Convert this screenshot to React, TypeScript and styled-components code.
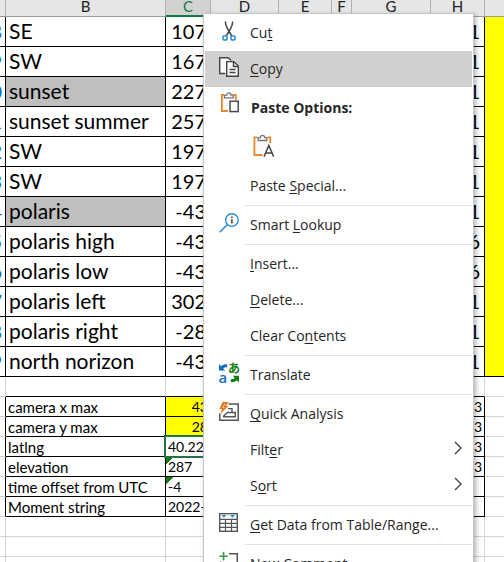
import React from "react";
import styled, { createGlobalStyle, css } from "styled-components";

const GlobalStyle = createGlobalStyle`
  *, *::before, *::after { box-sizing: border-box; }
  body {
    margin: 0;
    overflow: hidden;
    background: #fff;
    color: #000;
    font-family: Lato, "Liberation Sans", sans-serif;
  }
`;

const Page = styled.main`
  position: relative;
  height: 100vh;
  overflow: hidden;
`;

/* ---------- worksheet ---------- */

const Sheet = styled.table`
  width: 100%;
  table-layout: fixed;
  border-collapse: separate;
  border-spacing: 0;
`;

const Col = styled.col<{ $width?: number }>`
  ${(p) => p.$width && css`width: ${p.$width}px;`}
`;

const ColumnHead = styled.th<{ $active?: boolean }>`
  height: 17px;
  padding: 0 0 ${(p) => (p.$active ? 2 : 3)}px;
  line-height: 13px;
  font-size: 15px;
  font-weight: 400;
  background: ${(p) => (p.$active ? "#d2d2d2" : "#e6e6e6")};
  color: ${(p) => (p.$active ? "#217346" : "#222")};
  border-right: 1px solid #b1b1b1;
  border-bottom: ${(p) => (p.$active ? "2px solid #107c41" : "1px solid #9b9b9b")};
  &:last-child {
    border-right: 0;
  }
`;

type CellProps = {
  $large?: boolean;
  $ruled?: boolean;
  $underlined?: boolean;
  $number?: boolean;
  $right?: boolean;
  $fill?: string;
  $flag?: boolean;
  $selected?: boolean;
  $bare?: boolean;
};

const RULE = "#000";
const GRIDLINE = "#d4d4d4";

const Cell = styled.td<CellProps>`
  height: ${(p) => (p.$large ? 30 : 20)}px;
  padding: ${(p) => (p.$large ? "0 4px 1px 3px" : "0 2px")};
  overflow: hidden;
  white-space: nowrap;
  font-size: ${(p) => (p.$large ? (p.$number ? 20 : 21) : p.$number ? 14 : 15)}px;
  line-height: ${(p) => (p.$large ? 28 : 18)}px;
  text-align: ${(p) => (p.$right ? "right" : "left")};
  background: ${(p) => p.$fill ?? "#fff"};
  border-right: 1px solid ${(p) => (p.$ruled ? RULE : GRIDLINE)};
  border-bottom: 1px solid
    ${(p) => (p.$bare ? "transparent" : p.$ruled || p.$underlined ? RULE : GRIDLINE)};
  &:last-child {
    border-right: 0;
  }
  ${(p) =>
    p.$flag &&
    css`
      background: linear-gradient(135deg, #107c10 5px, transparent 5px) #fff;
    `}
  ${(p) =>
    p.$selected &&
    css`
      position: relative;
      overflow: visible;
      &::after {
        content: "";
        position: absolute;
        inset: -2px;
        border: 2px solid #217346;
      }
    `}
`;

/* Column A is scrolled almost out of view; only the tail of each number shows. */
const IdCell = styled(Cell)`
  padding: 0 0 1px;
  color: #0070c0;
`;

const Tail = styled.span`
  display: flex;
  justify-content: flex-end;
  padding-right: 3px;
`;

const LeadCell = styled(Cell)`
  padding: 0;
  border-right-color: ${RULE};
`;

const YELLOW = "#ffff00";
const GREY = "#bfbfbf";

const columns = [
  { name: "A", width: 6 },
  { name: "B", width: 160 },
  { name: "C", width: 45 },
  { name: "D", width: 68 },
  { name: "E", width: 53 },
  { name: "F", width: 20 },
  { name: "G", width: 79 },
  { name: "H", width: 54 },
  { name: "" },
];

const places = [
  { id: 8, name: "SE", c: "107", h: "1" },
  { id: 9, name: "SW", c: "167", h: "1" },
  { id: 10, name: "sunset", c: "227", h: "1", marked: true },
  { id: 11, name: "sunset summer", c: "257", h: "1" },
  { id: 12, name: "SW", c: "197", h: "1" },
  { id: 13, name: "SW", c: "197", h: "1" },
  { id: 14, name: "polaris", c: "-43", h: "1", marked: true },
  { id: 15, name: "polaris high", c: "-43", h: "6" },
  { id: 16, name: "polaris low", c: "-43", h: "6" },
  { id: 17, name: "polaris left", c: "302", h: "1" },
  { id: 18, name: "polaris right", c: "-28", h: "1" },
  { id: 19, name: "north norizon", c: "-43", h: "1" },
];

type Setting = {
  name: string;
  value: string;
  h: string;
  fill?: string;
  selected?: boolean;
  flag?: boolean;
};

const settings: Setting[] = [
  { name: "camera x max", value: "43", h: "3", fill: YELLOW },
  { name: "camera y max", value: "28", h: "3", fill: YELLOW },
  { name: "latlng", value: "40.22", h: "3", selected: true },
  { name: "elevation", value: "287", h: "3", flag: true },
  { name: "time offset from UTC", value: "-4", h: "", flag: true },
  { name: "Moment string", value: "2022-", h: "" },
];

const middle = ["D", "E", "F", "G"];

function EmptyRow({ underlined }: { underlined?: boolean }) {
  return (
    <tr>
      {columns.map((_, i) => (
        <Cell key={i} $underlined={underlined && i > 0 && i < columns.length - 1} />
      ))}
    </tr>
  );
}

function Worksheet() {
  return (
    <Sheet>
      <colgroup>
        {columns.map((c, i) => (
          <Col key={i} $width={c.width} />
        ))}
      </colgroup>
      <thead>
        <tr>
          {columns.map((c, i) => (
            <ColumnHead key={i} scope="col" $active={c.name === "C"}>
              {i === 0 ? "" : c.name}
            </ColumnHead>
          ))}
        </tr>
      </thead>
      <tbody>
        {places.map((p) => (
          <tr key={p.id}>
            <IdCell $large $ruled $number>
              <Tail>{p.id}</Tail>
            </IdCell>
            <Cell $large $ruled $fill={p.marked ? GREY : undefined}>{p.name}</Cell>
            <Cell $large $ruled $number $right>{p.c}</Cell>
            {middle.map((m) => (
              <Cell key={m} $large $ruled />
            ))}
            <Cell $large $ruled $number $right>{p.h}</Cell>
            <Cell $large $ruled $bare={p.id !== 19} $fill={YELLOW} />
          </tr>
        ))}
        <EmptyRow underlined />
        {settings.map((s) => (
          <tr key={s.name}>
            <LeadCell />
            <Cell $ruled>{s.name}</Cell>
            <Cell
              $ruled
              $number
              $right={!!s.fill}
              $fill={s.fill}
              $selected={s.selected}
              $flag={s.flag}
            >
              {s.value}
            </Cell>
            {middle.map((m) => (
              <Cell key={m} $ruled />
            ))}
            <Cell $ruled $number $right>{s.h}</Cell>
            <Cell />
          </tr>
        ))}
        <EmptyRow />
        <EmptyRow />
        <EmptyRow />
      </tbody>
    </Sheet>
  );
}

/* ---------- context menu ---------- */

const Menu = styled.div`
  position: absolute;
  top: 13px;
  left: 203px;
  width: 271px;
  padding: 1px;
  background: #fff;
  border: 1px solid #c6c6c6;
  box-shadow: 2px 2px 5px rgba(0, 0, 0, 0.3);
  color: #262626;
  font-family: "Open Sans", "Noto Sans", sans-serif;
  font-size: 14px;
`;

const Item = styled.button<{ $active?: boolean }>`
  display: grid;
  grid-template-columns: 45px 1fr 18px;
  width: 100%;
  height: 36px;
  padding: 0;
  border: 0;
  background: ${(p) => (p.$active ? "#d2d0ce" : "transparent")};
  color: inherit;
  font: inherit;
  line-height: 36px;
  text-align: left;
  white-space: nowrap;
  u {
    text-underline-offset: 2px;
    text-decoration-thickness: 1px;
    text-decoration-skip-ink: none;
  }
`;

const IconSlot = styled.span`
  display: flex;
  padding: 6px 0 0 14px;
`;

const Arrow = styled.span`
  display: flex;
  padding-top: 9px;
`;

const Heading = styled.div`
  display: grid;
  grid-template-columns: 46px 1fr;
  height: 40px;
  line-height: 42px;
  font-weight: 700;
`;

const PasteChoices = styled.div`
  display: flex;
  height: 41px;
  padding: 2px 0 0 41px;
`;

const PasteChoice = styled.button`
  display: flex;
  align-items: center;
  justify-content: center;
  width: 36px;
  height: 34px;
  padding: 0;
  border: 0;
  background: transparent;
`;

const Separator = styled.hr`
  height: 1px;
  margin: 1px 0 1px 40px;
  border: 0;
  background: #e1e1e1;
`;

const Glyph = styled.svg`
  display: block;
  flex: none;
  overflow: visible;
`;

const DARK = "#444";
const BLUE = "#2a8dd4";
const ORANGE = "#e8882a";

const CutIcon = () => (
  <Glyph width="20" height="20" viewBox="0 0 20 20" fill="none">
    <path d="M6.3 0.5C6.4 3 7 5 8.3 7.4L12.8 15M13.7 0.5C13.6 3 13 5 11.7 7.4L7.2 15" stroke={DARK} strokeWidth="1.5" />
    <circle cx="6" cy="16.9" r="2.2" stroke={BLUE} strokeWidth="1.5" />
    <circle cx="14" cy="16.9" r="2.2" stroke={BLUE} strokeWidth="1.5" />
  </Glyph>
);

const CopyIcon = () => (
  <Glyph width="20" height="20" viewBox="0 0 20 20" stroke={DARK} strokeWidth="1.4">
    <path d="M6 16.5H0.7V0.7H9.3L12 3.4" fill="#fafafa" />
    <path d="M7.7 4.6H14.8L19.3 9.1V19.3H7.7Z" fill="#fafafa" />
    <path d="M14.5 4.8V9.5H19.2M10.5 12.5H16.5M10.5 15.5H16.5" fill="none" />
  </Glyph>
);

const PasteIcon = () => (
  <Glyph width="20" height="20" viewBox="0 0 20 20">
    <rect x="3" y="2" width="13" height="15" fill="#fafafa" />
    <path d="M5 1.8H2.9V18H9" fill="none" stroke={ORANGE} strokeWidth="1.8" />
    <path d="M14 1.8H16.8V7" fill="none" stroke={ORANGE} strokeWidth="1.8" />
    <path d="M5.5 4.9V2.1H7.7C7.7 -1 12 -1 12 2.1H14.2V4.9Z" fill="#fafafa" stroke="#777" strokeWidth="1.3" />
    <rect x="9.5" y="7" width="11" height="12.5" fill="#fff" />
    <rect x="11" y="8.2" width="8.2" height="10.4" fill="#fafafa" stroke={DARK} strokeWidth="1.4" />
  </Glyph>
);

const PasteTextIcon = () => (
  <Glyph width="22" height="22" viewBox="0 0 21 22">
    <rect x="1" y="3" width="15" height="16" fill="#fafafa" />
    <path d="M4 2.3H0.9V20H9" fill="none" stroke={ORANGE} strokeWidth="1.8" />
    <path d="M14 2.3H16.8V8" fill="none" stroke={ORANGE} strokeWidth="1.8" />
    <path d="M4.7 5.5V2.7H6.8C6.8 -0.4 11.2 -0.4 11.2 2.7H13.3V5.5Z" fill="#fafafa" stroke="#777" strokeWidth="1.3" />
    <path d="M9.5 22L15 8L20.5 22Z" fill="#fff" />
    <path d="M10.5 21.8L15.3 10.4L20.2 21.8M12 18H18.6" fill="none" stroke={DARK} strokeWidth="1.5" />
  </Glyph>
);

const LookupIcon = () => (
  <Glyph width="20" height="20" viewBox="0 0 20 20" fill="none">
    <circle cx="12.9" cy="7" r="6.3" stroke={BLUE} strokeWidth="1.4" />
    <path d="M8.4 11.5L0.8 19.2" stroke={BLUE} strokeWidth="1.6" />
    <path d="M12.9 3.5V5M12.9 6.2V10.4" stroke={DARK} strokeWidth="1.6" />
  </Glyph>
);

const TranslateIcon = () => (
  <Glyph width="20" height="20" viewBox="0 0 20 20">
    <path d="M0 1L2.2 3.2C4 1.6 6 1.2 8.2 1.4V4.2C6.6 4 5.3 4.3 4.2 5.4L6.2 7.6H0Z" fill="#106ebe" />
    <path d="M20 19.4L17.8 17.2C16 18.9 14 19.4 11.8 19.1V16.2C13.4 16.4 14.7 16 15.8 15L13.8 12.8H20Z" fill="#107c10" />
    <text x="-0.4" y="19.6" fontFamily="Open Sans, sans-serif" fontSize="15" fontWeight="600" fill="#106ebe">a</text>
    <text x="9" y="10.2" fontFamily="Noto Sans CJK JP, sans-serif" fontSize="12" fontWeight="700" fill="#107c10">あ</text>
  </Glyph>
);

const AnalysisIcon = () => (
  <Glyph width="20" height="20" viewBox="0 0 20 20" fill="none">
    <path d="M9.5 1.9H19.2V18.2H0.8V11.5" stroke="#555" strokeWidth="1.5" />
    <path d="M4 14.8H16.3V10.5H8.3L4.3 14.6M9 6.6H13V10.5" stroke="#555" strokeWidth="1.4" />
    <path d="M3.6 0H9.6L7 4H9.4L1 12.2L3.2 7H0.4Z" fill="#e8761a" />
    <path d="M5.8 2L3.8 5.6H5.4" stroke="#fbd3a8" strokeWidth="1" />
  </Glyph>
);

const TableIcon = () => (
  <Glyph width="20" height="20" viewBox="0 0 20 20">
    <rect x="0.7" y="0.7" width="17.6" height="17.6" fill="#fff" stroke="#555" strokeWidth="1.4" />
    <path d="M1 6.4H18M1 10.4H18M1 14.4H18M6.5 6V18M12.5 6V18" stroke="#555" strokeWidth="1.2" />
    <path d="M2.4 2H7.4L4.9 4.7ZM11 2H16L13.5 4.7Z" fill="#2a8dd4" />
  </Glyph>
);

const CommentIcon = () => (
  <Glyph width="20" height="20" viewBox="0 0 20 20" fill="none">
    <path d="M10 1.8H18.3V15H8L4.5 18.5V15H1.7V9.5" stroke="#555" strokeWidth="1.5" />
    <path d="M4.6 0V8.4M0.4 4.2H8.8" stroke="#3a9a4c" strokeWidth="1.6" />
  </Glyph>
);

const Chevron = () => (
  <Glyph width="8" height="14" viewBox="0 0 8 14" fill="none">
    <path d="M1 1L7 7L1 13" stroke={DARK} strokeWidth="1.4" />
  </Glyph>
);

/* An underscore in a label precedes its access key. */
function Label({ text }: { text: string }) {
  const at = text.indexOf("_");
  if (at < 0) return <span>{text}</span>;
  return (
    <span>
      {text.slice(0, at)}
      <u>{text[at + 1]}</u>
      {text.slice(at + 2)}
    </span>
  );
}

type MenuItemProps = {
  label: string;
  icon?: React.ReactNode;
  active?: boolean;
  submenu?: boolean;
};

function MenuItem({ label, icon, active, submenu }: MenuItemProps) {
  return (
    <Item type="button" role="menuitem" $active={active} aria-haspopup={submenu ? "menu" : undefined}>
      <IconSlot>{icon}</IconSlot>
      <Label text={label} />
      {submenu && (
        <Arrow>
          <Chevron />
        </Arrow>
      )}
    </Item>
  );
}

function ContextMenu() {
  return (
    <Menu role="menu" aria-label="Cell actions">
      <MenuItem label="Cu_t" icon={<CutIcon />} />
      <MenuItem label="_Copy" icon={<CopyIcon />} active />
      <Heading>
        <IconSlot>
          <PasteIcon />
        </IconSlot>
        <span>Paste Options:</span>
      </Heading>
      <PasteChoices>
        <PasteChoice type="button" role="menuitem" aria-label="Keep Text Only">
          <PasteTextIcon />
        </PasteChoice>
      </PasteChoices>
      <MenuItem label="Paste _Special..." />
      <Separator />
      <MenuItem label="Smart _Lookup" icon={<LookupIcon />} />
      <Separator />
      <MenuItem label="_Insert..." />
      <MenuItem label="_Delete..." />
      <MenuItem label="Clear Co_ntents" />
      <Separator />
      <MenuItem label="Translate" icon={<TranslateIcon />} />
      <Separator />
      <MenuItem label="_Quick Analysis" icon={<AnalysisIcon />} />
      <MenuItem label="Filt_er" submenu />
      <MenuItem label="S_ort" submenu />
      <Separator />
      <MenuItem label="_Get Data from Table/Range..." icon={<TableIcon />} />
      <Separator />
      <MenuItem label="New Comment" icon={<CommentIcon />} />
    </Menu>
  );
}

export default function App() {
  return (
    <Page>
      <GlobalStyle />
      <Worksheet />
      <ContextMenu />
    </Page>
  );
}
